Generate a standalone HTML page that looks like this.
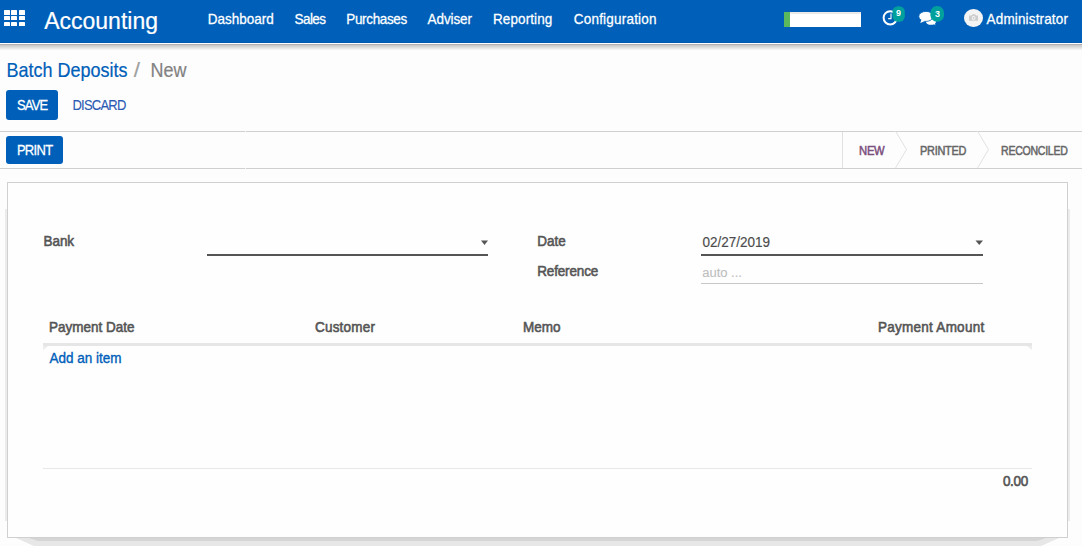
<!DOCTYPE html>
<html><head><meta charset="utf-8"><style>
html,body{margin:0;padding:0;}
body{width:1082px;height:546px;overflow:hidden;position:relative;background:#fdfdfd;font-family:"Liberation Sans", sans-serif;}
.t{position:absolute;white-space:nowrap;line-height:1;font-family:"Liberation Sans", sans-serif;}
.a{position:absolute;}
</style></head><body>
<!-- navbar -->
<div class="a" style="left:0;top:0;width:1082px;height:43px;background:#005fb9"></div>
<div class="a" style="left:0;top:42px;width:1082px;height:1px;background:#0058ae"></div>
<div class="a" style="left:0;top:43px;width:1082px;height:1px;background:#fff"></div>
<div class="a" style="left:0;top:44px;width:1082px;height:1px;background:#b0b0b0"></div><div class="a" style="left:0;top:45px;width:1082px;height:1px;background:#cccccc"></div><div class="a" style="left:0;top:46px;width:1082px;height:1px;background:#d4d4d4"></div><div class="a" style="left:0;top:47px;width:1082px;height:1px;background:#dedede"></div><div class="a" style="left:0;top:48px;width:1082px;height:1px;background:#e8e8e8"></div><div class="a" style="left:0;top:49px;width:1082px;height:1px;background:#f2f2f2"></div>
<svg class="a" style="left:0;top:0" width="30" height="30"><rect x="4" y="10" width="6" height="5" rx="0.6" fill="#fff"/><rect x="11" y="10" width="6" height="5" rx="0.6" fill="#fff"/><rect x="19" y="10" width="6" height="5" rx="0.6" fill="#fff"/><rect x="4" y="16" width="6" height="4" rx="0.6" fill="#fff"/><rect x="11" y="16" width="6" height="4" rx="0.6" fill="#fff"/><rect x="19" y="16" width="6" height="4" rx="0.6" fill="#fff"/><rect x="4" y="22" width="6" height="4" rx="0.6" fill="#fff"/><rect x="11" y="22" width="6" height="4" rx="0.6" fill="#fff"/><rect x="19" y="22" width="6" height="4" rx="0.6" fill="#fff"/></svg>
<!-- progress bar -->
<div class="a" style="left:784px;top:12px;width:77px;height:15px;background:#fff"></div>
<div class="a" style="left:784px;top:12px;width:77px;height:2px;background:#e9e9e9"></div>
<div class="a" style="left:784px;top:12px;width:6px;height:15px;background:#5cb85c"></div>
<!-- clock icon -->
<svg class="a" style="left:875px;top:0px" width="75" height="30" viewBox="0 0 75 30">
  <circle cx="15.2" cy="17.8" r="6.6" fill="none" stroke="#fff" stroke-width="2"/>
  <path d="M16 13.5 V18.6 H13.2" fill="none" stroke="#fff" stroke-width="1.1"/>
  <!-- chat -->
  <ellipse cx="56" cy="21.8" rx="5" ry="3" fill="#fff"/>
  <path d="M58 23 L60.5 25.6 L59.5 22.5 Z" fill="#fff"/>
  <ellipse cx="51" cy="16.4" rx="7.2" ry="5" fill="#fff" stroke="#005fb9" stroke-width="0.8"/>
  <path d="M46.5 19.5 L45.2 23 L50.5 20.8 Z" fill="#fff"/>
  <rect x="17.5" y="6.2" width="12.3" height="15.6" rx="5.6" fill="#00a09d"/>
  <rect x="55.4" y="6.1" width="13.6" height="15.6" rx="6.5" fill="#00a09d"/>
</svg>
<div class="t" style="left:892.3px;top:9.3px;width:12.3px;text-align:center;font-size:9px;font-weight:700;color:#fff;transform:scaleY(1.08)">9</div>
<div class="t" style="left:930.6px;top:9.5px;width:13.6px;text-align:center;font-size:9px;font-weight:700;color:#fff;transform:scaleY(1.08)">3</div>
<!-- avatar -->
<div class="a" style="left:964px;top:8.5px;width:19px;height:18.5px;border-radius:50%;background:#f4f4f4"></div>
<svg class="a" style="left:960px;top:6px" width="28" height="24" viewBox="0 0 28 24">
  <path d="M9 9.5 H11.5 L12.5 8.3 H15 L16 9.5 H18 V14.7 H9 Z" fill="#cdcdcd"/>
  <circle cx="13.6" cy="12" r="1.9" fill="#f4f4f4"/>
  <circle cx="13.6" cy="12" r="0.9" fill="#cdcdcd"/>
</svg>
<!-- control panel -->
<div class="a" style="left:0;top:50px;width:1082px;height:81px;background:#fdfdfd"></div>
<div class="a" style="left:6px;top:90px;width:52px;height:30px;border-radius:3px;background:#005fb9"></div>
<div class="a" style="left:0;top:131px;width:1082px;height:1px;background:#d0d0d0"></div>
<!-- statusbar -->
<div class="a" style="left:0;top:132px;width:1082px;height:36px;background:#fdfdfd"></div>
<div class="a" style="left:6px;top:136px;width:57px;height:28px;border-radius:3px;background:#005fb9"></div>
<div class="a" style="left:0;top:168px;width:1082px;height:1px;background:#d0d0d0"></div>
<div class="a" style="left:842px;top:132px;width:1px;height:36px;background:#e0e0e0"></div>
<div class="a" style="left:245px;top:131px;width:1px;height:1px;background:#f0f0f0"></div><div class="a" style="left:245px;top:168px;width:1px;height:1px;background:#f0f0f0"></div>
<svg class="a" style="left:880px;top:131px" width="120" height="38" viewBox="0 0 120 38">
  <path d="M15.5 0 L26.5 18.5 L15.5 37" fill="none" stroke="#e2e2e2" stroke-width="1"/>
  <path d="M97.5 0 L108.5 18.5 L97.5 37" fill="none" stroke="#e2e2e2" stroke-width="1"/>
</svg>
<!-- sheet -->
<div class="a" style="left:5px;top:209px;width:2px;height:312px;background:#ececec"></div>
<div class="a" style="left:1068px;top:209px;width:2px;height:312px;background:#ececec"></div>
<svg class="a" style="left:0;top:530px" width="1082" height="16" viewBox="0 530 1082 16">
  <polygon points="16,538 1059,538 1040,546.5 35,546.5" fill="#e7e7e7"/>
  <polygon points="29,538 1046,538 1037,541 38,541" fill="#d5d5d5"/>
</svg>
<div class="a" style="left:7px;top:182px;width:1059px;height:354px;border:1px solid #d0d0d0;background:#fefefe"></div>
<!-- fields -->
<div class="a" style="left:207px;top:254px;width:281px;height:2px;background:#555"></div>
<svg class="a" style="left:480px;top:240px" width="9" height="6"><path d="M1 0.5 H8 L4.5 5 Z" fill="#555"/></svg>
<div class="a" style="left:701px;top:254px;width:282px;height:2px;background:#555"></div>
<svg class="a" style="left:975px;top:240px" width="9" height="6"><path d="M0.5 0.5 H8 L4.25 5 Z" fill="#555"/></svg>
<div class="a" style="left:701px;top:283px;width:282px;height:1px;background:#c8c8c8"></div>
<!-- table -->
<div class="a" style="left:43px;top:343px;width:989px;height:3px;background:#e6e6e6"></div>
<svg class="a" style="left:0;top:340px" width="1082" height="12" viewBox="0 340 1082 12"><polygon points="43,346 48,346 43,350" fill="#ececec"/><polygon points="1027,346 1032,346 1032,350" fill="#ececec"/></svg>
<div class="a" style="left:43px;top:468px;width:989px;height:1px;background:#e8e8e8"></div>
<div class="t" style="left:44.20px;top:10.23px;font-size:23px;font-weight:400;color:#fff;letter-spacing:0px;-webkit-text-stroke:0.2px #fff;">Accounting</div><div class="t" style="left:207.70px;top:12.67px;font-size:13.5px;font-weight:400;color:#fff;letter-spacing:0px;transform:scale(1.0,1.12);transform-origin:1px 11.43px;-webkit-text-stroke:0.25px #fff;">Dashboard</div><div class="t" style="left:294.60px;top:12.67px;font-size:13.5px;font-weight:400;color:#fff;letter-spacing:-0.6px;transform:scale(1.0,1.12);transform-origin:1px 11.43px;-webkit-text-stroke:0.25px #fff;">Sales</div><div class="t" style="left:346.30px;top:12.67px;font-size:13.5px;font-weight:400;color:#fff;letter-spacing:-0.35px;transform:scale(1.0,1.12);transform-origin:1px 11.43px;-webkit-text-stroke:0.25px #fff;">Purchases</div><div class="t" style="left:427.60px;top:12.67px;font-size:13.5px;font-weight:400;color:#fff;letter-spacing:-0.1px;transform:scale(1.0,1.12);transform-origin:1px 11.43px;-webkit-text-stroke:0.25px #fff;">Adviser</div><div class="t" style="left:493.00px;top:12.67px;font-size:13.5px;font-weight:400;color:#fff;letter-spacing:0.1px;transform:scale(1.0,1.12);transform-origin:1px 11.43px;-webkit-text-stroke:0.25px #fff;">Reporting</div><div class="t" style="left:573.80px;top:12.67px;font-size:13.5px;font-weight:400;color:#fff;letter-spacing:0.2px;transform:scale(1.0,1.12);transform-origin:1px 11.43px;-webkit-text-stroke:0.25px #fff;">Configuration</div><div class="t" style="left:986.60px;top:12.57px;font-size:13.5px;font-weight:400;color:#fff;letter-spacing:0.15px;transform:scale(1.0,1.12);transform-origin:0px 11.43px;-webkit-text-stroke:0.25px #fff;">Administrator</div><div class="t" style="left:6.40px;top:61.66px;font-size:18px;font-weight:400;color:#005fb9;letter-spacing:0px;transform:scale(1.0,1.12);transform-origin:1px 15.24px;-webkit-text-stroke:0.2px #005fb9;">Batch Deposits</div><div class="t" style="left:134.30px;top:61.66px;font-size:18px;font-weight:400;color:#a0a0a0;letter-spacing:0px;transform:scale(1.25,1.08);transform-origin:1px 15.24px;-webkit-text-stroke:0.15px #a0a0a0;">/</div><div class="t" style="left:150.50px;top:61.66px;font-size:18px;font-weight:400;color:#828282;letter-spacing:0px;transform:scale(1.0,1.12);transform-origin:1px 15.24px;-webkit-text-stroke:0.2px #828282;">New</div><div class="t" style="left:16.90px;top:99.10px;font-size:13px;font-weight:400;color:#fff;letter-spacing:-0.8px;transform:scale(1.0,1.12);transform-origin:1px 11.00px;-webkit-text-stroke:0.25px #fff;">SAVE</div><div class="t" style="left:72.40px;top:99.00px;font-size:13px;font-weight:400;color:#2a5ab4;letter-spacing:-0.75px;transform:scale(1.0,1.12);transform-origin:1px 11.00px;-webkit-text-stroke:0.1px #2a5ab4;">DISCARD</div><div class="t" style="left:16.90px;top:144.00px;font-size:13px;font-weight:400;color:#fff;letter-spacing:-0.7px;transform:scale(1.0,1.12);transform-origin:1px 11.00px;-webkit-text-stroke:0.25px #fff;">PRINT</div><div class="t" style="left:859.00px;top:145.04px;font-size:12px;font-weight:400;color:#7b4e7c;letter-spacing:-0.3px;transform:scale(0.937,1.0);transform-origin:1px 10.16px;-webkit-text-stroke:0.5px #7b4e7c;">NEW</div><div class="t" style="left:919.60px;top:145.04px;font-size:12px;font-weight:400;color:#666;letter-spacing:-0.3px;transform:scale(0.909,1.0);transform-origin:1px 10.16px;-webkit-text-stroke:0.5px #666;">PRINTED</div><div class="t" style="left:1001.00px;top:145.04px;font-size:12px;font-weight:400;color:#666;letter-spacing:-0.3px;transform:scale(0.878,1.0);transform-origin:1px 10.16px;-webkit-text-stroke:0.5px #666;">RECONCILED</div><div class="t" style="left:43.60px;top:235.37px;font-size:13.5px;font-weight:400;color:#555;letter-spacing:-0.1px;transform:scale(1.0,1.1);transform-origin:1px 11.43px;-webkit-text-stroke:0.55px #555;">Bank</div><div class="t" style="left:537.20px;top:235.47px;font-size:13.5px;font-weight:400;color:#555;letter-spacing:0px;transform:scale(1.0,1.1);transform-origin:1px 11.43px;-webkit-text-stroke:0.55px #555;">Date</div><div class="t" style="left:537.20px;top:265.07px;font-size:13.5px;font-weight:400;color:#555;letter-spacing:-0.15px;transform:scale(1.0,1.1);transform-origin:1px 11.43px;-webkit-text-stroke:0.55px #555;">Reference</div><div class="t" style="left:702.50px;top:235.57px;font-size:13.5px;font-weight:400;color:#4c4c4c;letter-spacing:0px;transform:scale(1.0,1.12);transform-origin:0px 11.43px;-webkit-text-stroke:0.15px #4c4c4c;">02/27/2019</div><div class="t" style="left:702.20px;top:265.90px;font-size:13px;font-weight:400;color:#bdbdbd;letter-spacing:0px;transform:scale(1.0,1.04);transform-origin:1px 11.00px;-webkit-text-stroke:0.1px #bdbdbd;">auto ...</div><div class="t" style="left:49.00px;top:320.57px;font-size:13.5px;font-weight:400;color:#555;letter-spacing:0px;transform:scale(1.0,1.12);transform-origin:1px 11.43px;-webkit-text-stroke:0.55px #555;">Payment Date</div><div class="t" style="left:315.00px;top:320.57px;font-size:13.5px;font-weight:400;color:#555;letter-spacing:0.2px;transform:scale(1.0,1.12);transform-origin:1px 11.43px;-webkit-text-stroke:0.55px #555;">Customer</div><div class="t" style="left:522.90px;top:320.57px;font-size:13.5px;font-weight:400;color:#555;letter-spacing:0px;transform:scale(1.0,1.12);transform-origin:1px 11.43px;-webkit-text-stroke:0.55px #555;">Memo</div><div class="t" style="left:878.10px;top:320.57px;font-size:13.5px;font-weight:400;color:#555;letter-spacing:0.25px;transform:scale(1.0,1.12);transform-origin:1px 11.43px;-webkit-text-stroke:0.55px #555;">Payment Amount</div><div class="t" style="left:49.40px;top:351.77px;font-size:13.5px;font-weight:400;color:#005fb9;letter-spacing:0px;transform:scale(1.0,1.03);transform-origin:0px 11.43px;-webkit-text-stroke:0.35px #005fb9;">Add an item</div><div class="t" style="left:1002.90px;top:475.17px;font-size:13.5px;font-weight:400;color:#555;letter-spacing:-0.3px;transform:scale(1.0,1.12);transform-origin:0px 11.43px;-webkit-text-stroke:0.55px #555;">0.00</div>
</body></html>
